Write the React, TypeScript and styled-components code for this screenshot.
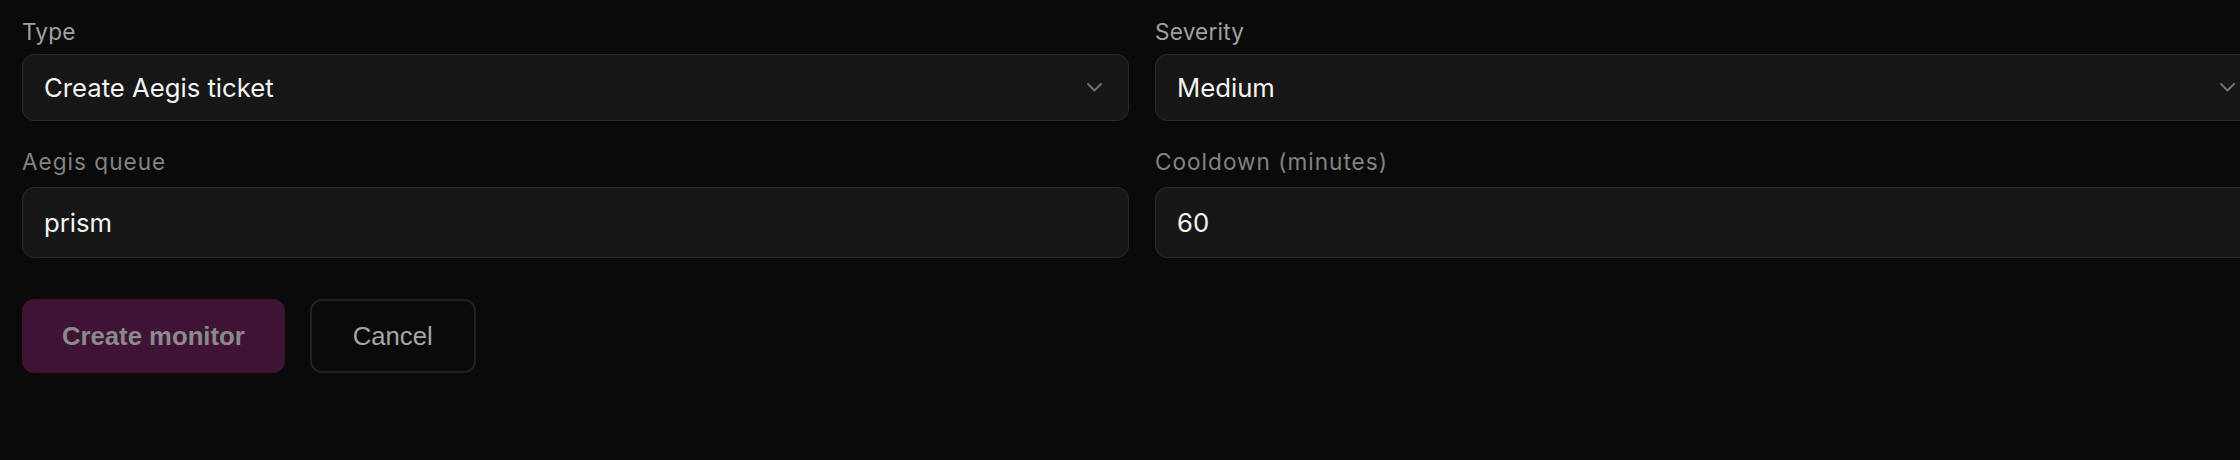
import React from "react";
import styled, { createGlobalStyle } from "styled-components";

const GlobalStyle = createGlobalStyle`
  html, body {
    margin: 0;
    padding: 0;
    background: #0a0a0a;
    overflow: hidden;
  }
  body {
    font-family: Inter, "Noto Sans", "Liberation Sans", sans-serif;
    color: #f2f2f2;
  }
  * { box-sizing: border-box; }
`;

const Page = styled.div`
  padding: 19px 0 40px 22px;
  height: 460px;
`;

const Form = styled.form`
  width: 2240px;
  display: flex;
  flex-direction: column;
`;

const Grid = styled.div`
  display: grid;
  grid-template-columns: 1fr 1fr;
  column-gap: 26px;
  row-gap: 28px;
`;

const Field = styled.div`
  display: flex;
  flex-direction: column;
`;

const Label = styled.label<{ $spaced?: boolean }>`
  font-size: 22.6px;
  line-height: 26px;
  font-weight: 400;
  color: ${(p) => (p.$spaced ? "#828282" : "#a1a1a1")};
  letter-spacing: ${(p) => (p.$spaced ? "1px" : "0.2px")};
  margin-bottom: ${(p) => (p.$spaced ? "12px" : "9px")};
`;

const SelectBox = styled.div`
  position: relative;
  height: 67px;
  display: flex;
  align-items: center;
  justify-content: space-between;
  padding: 0 26px 0 21px;
  background: #171717;
  border: 1.5px solid #2a2a2a;
  border-radius: 12px;
  font-size: 25.7px;
  color: #f4f4f4;
`;

const InputBox = styled.input`
  height: 71px;
  padding: 0 21px;
  background: #171717;
  border: 1.5px solid #2a2a2a;
  border-radius: 12px;
  font-family: Inter, "Noto Sans", sans-serif;
  font-size: 25.7px;
  color: #f4f4f4;
  outline: none;
`;

const Chevron = styled.svg`
  width: 15px;
  height: 9px;
  flex: none;
`;

const Actions = styled.div`
  display: flex;
  gap: 25px;
  margin-top: 41px;
`;

const Button = styled.button<{ $primary?: boolean }>`
  height: 74px;
  padding: 0 ${(p) => (p.$primary ? "40px" : "41px")};
  border-radius: 12px;
  font-family: "Liberation Sans", Arial, sans-serif;
  font-size: 25.7px;
  font-weight: ${(p) => (p.$primary ? 700 : 400)};
  color: ${(p) => (p.$primary ? "#8a8a8a" : "#a6a6a6")};
  background: ${(p) => (p.$primary ? "#3f1336" : "transparent")};
  border: ${(p) => (p.$primary ? "none" : "2px solid #222222")};
  cursor: pointer;
`;

const ChevronDown = () => (
  <Chevron viewBox="0 0 15 9" fill="none">
    <polyline
      points="1,1 7.5,7.5 14,1"
      stroke="#707070"
      strokeWidth="2"
      strokeLinecap="round"
      strokeLinejoin="round"
    />
  </Chevron>
);

export default function App() {
  return (
    <>
      <GlobalStyle />
      <Page>
        <Form onSubmit={(e) => e.preventDefault()}>
          <Grid>
            <Field>
              <Label>Type</Label>
              <SelectBox>
                <span>Create Aegis ticket</span>
                <ChevronDown />
              </SelectBox>
            </Field>
            <Field>
              <Label>Severity</Label>
              <SelectBox>
                <span>Medium</span>
                <ChevronDown />
              </SelectBox>
            </Field>
            <Field>
              <Label $spaced>Aegis queue</Label>
              <InputBox defaultValue="prism" />
            </Field>
            <Field>
              <Label $spaced>Cooldown (minutes)</Label>
              <InputBox defaultValue="60" />
            </Field>
          </Grid>
          <Actions>
            <Button type="button" $primary disabled>
              Create monitor
            </Button>
            <Button type="button">Cancel</Button>
          </Actions>
        </Form>
      </Page>
    </>
  );
}
